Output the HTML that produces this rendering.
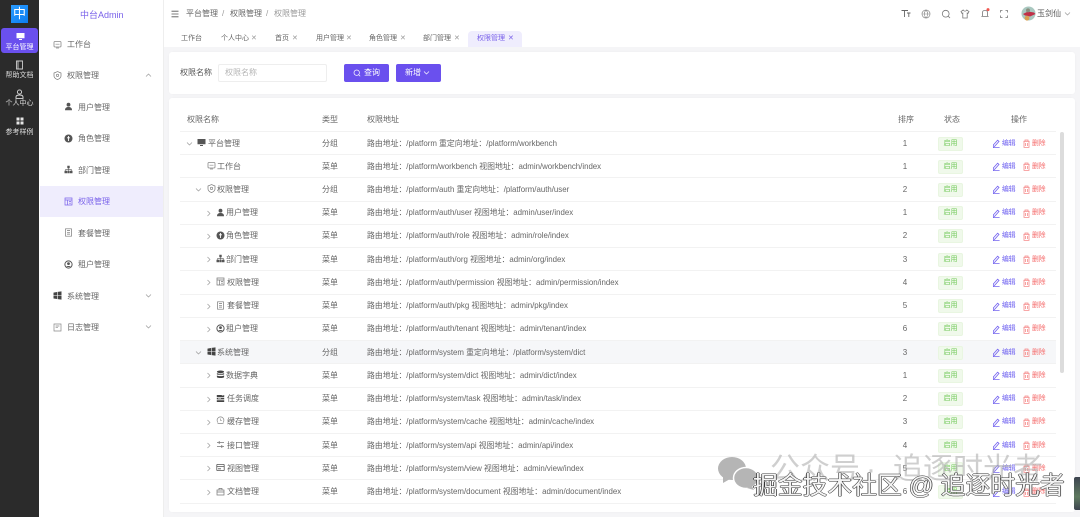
<!DOCTYPE html>
<html lang="zh"><head><meta charset="utf-8"><title>权限管理</title>
<style>
*{box-sizing:border-box;margin:0;padding:0}
html,body{width:1080px;height:517px;overflow:hidden;background:#f5f5f7}
body{position:relative;font-family:"Liberation Sans","Noto Sans CJK SC",sans-serif;font-size:8px;color:#666}
#w{left:0;top:0;width:1080px;height:517px;overflow:hidden;background:#f5f5f7;filter:blur(.3px)}
div,span,svg{position:absolute;white-space:nowrap}
.rail{left:0;top:0;width:39px;height:517px;background:#2b2b2b}
.rl{left:0;width:39px;text-align:center;color:#ddd;font-size:7px;line-height:9px}
.side{left:39px;top:0;width:125px;height:517px;background:#fff;border-right:1px solid #eee}
.m{font-size:8px;line-height:12px;color:#666}
.hdr{left:164px;top:0;width:916px;height:47px;background:#fff}
.tab{top:34px;font-size:7px;line-height:10px;color:#666}
.x{font-size:7px;color:#999;top:34px;line-height:10px}
.card{background:#fff;border-radius:3px;left:169px;width:906px;box-shadow:0 0 2px rgba(0,0,0,.03)}
.th{top:115px;line-height:10px;color:#666;font-size:8px}
.row{left:180px;width:876px;height:23.25px;border-bottom:1px solid #f2f2f2}
.row span{line-height:10px;top:6.5px;color:#666}
.n{color:#5f5f5f}
.t{left:142px}
.p{left:187px;font-size:7.87px}
.s{left:700px;width:50px;text-align:center}
.b{left:758px!important;top:4.5px!important;width:25px;height:14px;background:#f0f9eb;border:1px solid #e9f6e1;border-radius:2px;color:#72c95a!important;text-align:center;line-height:12px!important;font-size:7px}
.e{left:822px;font-size:6.8px;color:#6a5cf0!important}
.d{left:852px;font-size:6.8px;color:#f56c6c!important}
.row svg{top:7px}
.ei{left:812px;width:8px;height:9px}
.di{left:842px;width:8px;height:9px}
.ch{width:7px;height:7px;top:8px!important}
.ic{width:9px;height:9px}
</style></head><body><div id="w">
<svg width="0" height="0" style="left:0;top:0"><defs>
<g id="pen"><path d="M2 8L1.4 5.8 5.6 1.2 7 2.4 2.8 7.2 1 8.2M1 8.6H7.6" fill="none" stroke="#7565ef" stroke-width=".8"/></g>
<g id="bin"><path d="M1.5 2.3H7.5M3 2V1H6V2M2 2.5V8.4H7V2.5M3.6 4V7M5.4 4V7" fill="none" stroke="#f58a8a" stroke-width=".8"/></g>
<g id="down"><path d="M1 2.5L3.5 5 6 2.5" fill="none" stroke="#999" stroke-width=".7"/></g>
<g id="right"><path d="M2.5 1L5 3.5 2.5 6" fill="none" stroke="#999" stroke-width=".7"/></g>
<g id="mon"><path d="M.5 1H8.5V6.2H.5ZM3 8H6V7H3Z" fill="#555"/></g>
<g id="wb"><rect x="1" y="1.5" width="7" height="5.5" rx="1" fill="none" stroke="#888" stroke-width=".8"/><path d="M2.5 4.2H6.5M3 8H6" stroke="#888" stroke-width=".7"/></g>
<g id="shield"><path d="M4.5.6L8 2V5C8 7 6 8 4.5 8.6 3 8 1 7 1 5V2Z" fill="none" stroke="#777" stroke-width=".7"/><circle cx="4.5" cy="4.4" r="1.2" fill="none" stroke="#777" stroke-width=".6"/></g>
<g id="user"><circle cx="4.5" cy="2.7" r="1.9" fill="#555"/><path d="M1 8.2C1 5.8 2.5 5 4.5 5S8 5.8 8 8.2Z" fill="#555"/></g>
<g id="role"><circle cx="4.5" cy="4.5" r="4" fill="#555"/><path d="M4.5 2V7M3 3.8H6" stroke="#fff" stroke-width=".9"/></g>
<g id="org"><path d="M3.3 .8H5.7V3.2H3.3ZM.5 5.8H3V8.2H.5ZM3.3 5.8H5.7V8.2H3.3ZM6 5.8H8.5V8.2H6Z" fill="#555"/><path d="M1.7 5.8V4.4H7.3V5.8M4.5 3V5.8" fill="none" stroke="#555" stroke-width=".6"/></g>
<g id="perm"><path d="M1 1H8V8H1ZM1 3H8M3.5 3V8M5 4.5H7M5 6.2H7" fill="none" stroke="#777" stroke-width=".7"/></g>
<g id="pkg"><path d="M1.5 .8H7.5V8.2H1.5ZM3 2.5H6M3 4.3H6M3 6.1H6" fill="none" stroke="#777" stroke-width=".7"/></g>
<g id="ten"><circle cx="4.5" cy="4.5" r="3.6" fill="none" stroke="#555" stroke-width="1"/><circle cx="4.5" cy="3.6" r="1.4" fill="#555"/><path d="M2.2 7C2.8 5.7 6.2 5.7 6.8 7" fill="#555"/></g>
<g id="win"><path d="M.5 1.6L4 1V4.2H.5ZM4.6 .9L8.5 .4V4.2H4.6ZM.5 4.8H4V8L.5 7.5ZM4.6 4.8H8.5V8.6L4.6 8.1Z" fill="#444"/></g>
<g id="log"><path d="M1 1H8V8H1ZM2.6 3H6.4M2.6 4.7H5" fill="none" stroke="#888" stroke-width=".7"/></g>
<g id="db"><ellipse cx="4.5" cy="1.8" rx="3.6" ry="1.3" fill="#444"/><path d="M.9 3V4.2C.9 5 8.1 5 8.1 4.2V3C7 4 2 4 .9 3ZM.9 5.4V7C.9 8.4 8.1 8.4 8.1 7V5.4C7 6.4 2 6.4 .9 5.4Z" fill="#444"/></g>
<g id="task"><path d="M.8 1H8.2V3H.8ZM.8 3.8H8.2V5.4H.8ZM.8 6.2H8.2V8H.8Z" fill="#444"/><path d="M5.8 1.6H7.6M2 4.6H5" stroke="#fff" stroke-width=".5"/></g>
<g id="cache"><path d="M2 6.6A3.4 3.4 0 1 1 7 6.6M1.6 7.6H7.4" fill="none" stroke="#888" stroke-width=".7"/><path d="M4.5 2.5V4.5H6" fill="none" stroke="#888" stroke-width=".6"/></g>
<g id="api"><path d="M1 2.5H8M1 6.5H8M3.2 1V4M5.8 5V8" fill="none" stroke="#777" stroke-width=".8"/></g>
<g id="view"><rect x=".8" y="1.4" width="7.4" height="6.2" rx=".6" fill="none" stroke="#555" stroke-width=".8"/><path d="M.8 3.4H8.2M2 5.8H5" stroke="#555" stroke-width=".8"/></g>
<g id="doc"><path d="M1 3H8V8H1ZM3 3V1.4H6V3M1 5H8" fill="none" stroke="#777" stroke-width=".7"/></g>
</defs></svg>

<div class="rail"></div>
<div style="left:11px;top:5px;width:17px;height:18px;background:linear-gradient(135deg,#2a9cff,#0c7cf0);color:#fff;font-size:13px;line-height:18px;text-align:center">中</div>
<div style="left:1px;top:28px;width:37px;height:25px;background:#6a50ee;border-radius:3px"></div>
<svg style="left:16px;top:32px" width="9" height="9"><path d="M.5 1H8.5V6.2H.5ZM3 8H6V7H3Z" fill="#fff"/></svg>
<div class="rl" style="top:43px;color:#fff">平台管理</div>
<svg style="left:15px;top:60px" width="9" height="10"><path d="M1.5 1H7.5V9H1.5ZM3 1V9" fill="none" stroke="#ccc" stroke-width=".9"/></svg>
<div class="rl" style="top:71px">帮助文档</div>
<svg style="left:15px;top:89px" width="9" height="10"><circle cx="4.5" cy="3" r="2.1" fill="none" stroke="#ddd" stroke-width=".9"/><path d="M1 9.4V8C1 6.6 2.5 6 4.5 6S8 6.6 8 8V9.4Z" fill="none" stroke="#ddd" stroke-width=".9"/></svg>
<div class="rl" style="top:99px">个人中心</div>
<svg style="left:16px;top:117px" width="8" height="8"><path d="M.5.5H3.5V3.5H.5ZM4.5.5H7.5V3.5H4.5ZM.5 4.5H3.5V7.5H.5ZM4.5 4.5H7.5V7.5H4.5Z" fill="#e5e5e5"/></svg>
<div class="rl" style="top:128px">参考样例</div>

<div class="side"></div>
<div style="left:80px;top:9px;font-size:9px;line-height:12px;color:#7a62ea">中台Admin</div>
<svg class="ic" style="left:53px;top:40px"><use href="#wb"/></svg><div class="m" style="left:67px;top:39px">工作台</div>
<svg class="ic" style="left:53px;top:71px"><use href="#shield"/></svg><div class="m" style="left:67px;top:70px">权限管理</div>
<svg style="left:145px;top:72px" width="7" height="7"><path d="M1 4.5L3.5 2 6 4.5" fill="none" stroke="#999" stroke-width=".7"/></svg>
<svg class="ic" style="left:64px;top:102px"><use href="#user"/></svg><div class="m" style="left:78px;top:102px">用户管理</div>
<svg class="ic" style="left:64px;top:134px"><use href="#role"/></svg><div class="m" style="left:78px;top:133px">角色管理</div>
<svg class="ic" style="left:64px;top:165px"><use href="#org"/></svg><div class="m" style="left:78px;top:165px">部门管理</div>
<div style="left:40px;top:186px;width:123px;height:31px;background:#efedfd"></div>
<svg class="ic" style="left:64px;top:197px"><path d="M1 1H8V8H1ZM1 3H8M3.5 3V8M5 4.5H7M5 6.2H7" fill="none" stroke="#7a62ea" stroke-width=".7"/></svg><div class="m" style="left:78px;top:196px;color:#7a62ea">权限管理</div>
<svg class="ic" style="left:64px;top:228px"><use href="#pkg"/></svg><div class="m" style="left:78px;top:228px">套餐管理</div>
<svg class="ic" style="left:64px;top:260px"><use href="#ten"/></svg><div class="m" style="left:78px;top:259px">租户管理</div>
<svg class="ic" style="left:53px;top:291px"><use href="#win"/></svg><div class="m" style="left:67px;top:291px">系统管理</div>
<svg style="left:145px;top:292px" width="7" height="7"><use href="#down"/></svg>
<svg class="ic" style="left:53px;top:323px"><use href="#log"/></svg><div class="m" style="left:67px;top:322px">日志管理</div>
<svg style="left:145px;top:323px" width="7" height="7"><use href="#down"/></svg>

<div class="hdr"></div>
<svg style="left:171px;top:10px" width="8" height="8"><path d="M.5 1.2H7.5M.5 4H7.5M.5 6.8H7.5" stroke="#555" stroke-width=".8"/></svg>
<div style="left:186px;top:9px;line-height:10px;font-size:8px;color:#666">平台管理</div>
<div style="left:222px;top:9px;line-height:10px;color:#999">/</div>
<div style="left:230px;top:9px;line-height:10px;color:#666">权限管理</div>
<div style="left:266px;top:9px;line-height:10px;color:#999">/</div>
<div style="left:274px;top:9px;line-height:10px;color:#999">权限管理</div>

<svg style="left:901px;top:9px" width="10" height="9"><path d="M.5 1.5H7M3.5 1.5V8M6 4H9.5M7.8 4V8" fill="none" stroke="#666" stroke-width=".9"/></svg>
<svg style="left:921px;top:9px" width="10" height="10"><circle cx="5" cy="5" r="4" fill="none" stroke="#888" stroke-width=".7"/><path d="M1 5H9M5 1C2.8 3.5 2.8 6.5 5 9M5 1C7.2 3.5 7.2 6.5 5 9" fill="none" stroke="#888" stroke-width=".6"/></svg>
<svg style="left:941px;top:9px" width="10" height="10"><circle cx="4.7" cy="4.7" r="3.4" fill="none" stroke="#777" stroke-width=".8"/><path d="M7.2 7.2L9 9" stroke="#777" stroke-width=".8"/></svg>
<svg style="left:960px;top:9px" width="10" height="10"><path d="M3.2 1L1 2.6 2 4.4 2.8 4V9H7.2V4L8 4.4 9 2.6 6.8 1C6 2.6 4 2.6 3.2 1Z" fill="none" stroke="#777" stroke-width=".8"/></svg>
<svg style="left:980px;top:8px" width="10" height="11"><path d="M1.4 8.4H8.6M2.4 8.2V5C2.4 3.4 3.4 2.4 5 2.4S7.6 3.4 7.6 5V8.2" fill="none" stroke="#777" stroke-width=".8"/><circle cx="8" cy="1.6" r="1.5" fill="#f0564f"/></svg>
<svg style="left:1000px;top:10px" width="8" height="8"><path d="M.5 2.5V.5H2.5M5.5.5H7.5V2.5M7.5 5.5V7.5H5.5M2.5 7.5H.5V5.5" fill="none" stroke="#777" stroke-width=".8"/></svg>
<svg style="left:1021px;top:6px" width="15" height="15"><circle cx="7.5" cy="7.5" r="7" fill="#a9c8c0"/><path d="M2 8L7 5.5 13 6.5 14.5 8 9 10.5 4 9.5Z" fill="#c03048"/><circle cx="6" cy="12.2" r="2.4" fill="#d9a052"/><circle cx="7" cy="4.4" r="2" fill="#8a8f80"/></svg>
<div style="left:1037px;top:9px;line-height:10px;color:#555">玉剑仙</div>
<svg style="left:1064px;top:10px" width="7" height="7"><use href="#down"/></svg>

<div class="tab" style="left:181px">工作台</div>
<div class="tab" style="left:221px">个人中心</div><div class="x" style="left:251px">✕</div>
<div class="tab" style="left:275px">首页</div><div class="x" style="left:292px">✕</div>
<div class="tab" style="left:316px">用户管理</div><div class="x" style="left:346px">✕</div>
<div class="tab" style="left:369px">角色管理</div><div class="x" style="left:400px">✕</div>
<div class="tab" style="left:423px">部门管理</div><div class="x" style="left:454px">✕</div>
<div style="left:468px;top:31px;width:54px;height:16px;background:#efedfd;border-radius:4px 4px 0 0"></div>
<div class="tab" style="left:477px;color:#7a62ea">权限管理</div><div class="x" style="left:508px;color:#7a62ea">✕</div>

<div class="card" style="top:52px;height:42px"></div>
<div style="left:180px;top:68px;font-size:8px;line-height:10px;color:#555">权限名称</div>
<div style="left:218px;top:64px;width:109px;height:18px;border:1px solid #eee;border-radius:2px;background:#fff"></div>
<div style="left:225px;top:68px;line-height:10px;color:#b5b5b5">权限名称</div>
<div style="left:344px;top:64px;width:45px;height:18px;background:#6a50ee;border-radius:2px"></div>
<svg style="left:353px;top:69px" width="8" height="8"><circle cx="3.7" cy="3.7" r="2.7" fill="none" stroke="#fff" stroke-width=".7"/><path d="M5.7 5.7L7.2 7.2" stroke="#fff" stroke-width=".7"/></svg>
<div style="left:364px;top:68px;line-height:10px;color:#fff">查询</div>
<div style="left:396px;top:64px;width:45px;height:18px;background:#6a50ee;border-radius:2px"></div>
<div style="left:405px;top:68px;line-height:10px;color:#fff">新增</div>
<svg style="left:423px;top:69px" width="7" height="7"><path d="M1 2.5L3.5 5 6 2.5" fill="none" stroke="#fff" stroke-width=".7"/></svg>

<div class="card" style="top:98px;height:414px"></div>
<div class="th" style="left:187px">权限名称</div>
<div class="th" style="left:322px">类型</div>
<div class="th" style="left:367px">权限地址</div>
<div class="th" style="left:898px">排序</div>
<div class="th" style="left:944px">状态</div>
<div class="th" style="left:1011px">操作</div>
<div style="left:180px;top:131px;width:876px;height:1px;background:#f2f2f2"></div>

<div class="row" style="top:132px"><svg class="ch" style="left:6px"><use href="#down"/></svg><svg class="ic" style="left:17px;top:6px"><use href="#mon"/></svg><span class="n" style="left:28px">平台管理</span><span class="t">分组</span><span class="p">路由地址：/platform 重定向地址：/platform/workbench</span><span class="s">1</span><span class="b">启用</span><svg class="ei"><use href="#pen"/></svg><span class="e">编辑</span><svg class="di"><use href="#bin"/></svg><span class="d">删除</span></div>
<div class="row" style="top:155.2px"><svg class="ic" style="left:27px;top:6px"><use href="#wb"/></svg><span class="n" style="left:37px">工作台</span><span class="t">菜单</span><span class="p">路由地址：/platform/workbench 视图地址：admin/workbench/index</span><span class="s">1</span><span class="b">启用</span><svg class="ei"><use href="#pen"/></svg><span class="e">编辑</span><svg class="di"><use href="#bin"/></svg><span class="d">删除</span></div>
<div class="row" style="top:178.4px"><svg class="ch" style="left:15px"><use href="#down"/></svg><svg class="ic" style="left:27px;top:6px"><use href="#shield"/></svg><span class="n" style="left:37px">权限管理</span><span class="t">分组</span><span class="p">路由地址：/platform/auth 重定向地址：/platform/auth/user</span><span class="s">2</span><span class="b">启用</span><svg class="ei"><use href="#pen"/></svg><span class="e">编辑</span><svg class="di"><use href="#bin"/></svg><span class="d">删除</span></div>
<div class="row" style="top:201.7px"><svg class="ch" style="left:25px"><use href="#right"/></svg><svg class="ic" style="left:36px;top:6px"><use href="#user"/></svg><span class="n" style="left:46px">用户管理</span><span class="t">菜单</span><span class="p">路由地址：/platform/auth/user 视图地址：admin/user/index</span><span class="s">1</span><span class="b">启用</span><svg class="ei"><use href="#pen"/></svg><span class="e">编辑</span><svg class="di"><use href="#bin"/></svg><span class="d">删除</span></div>
<div class="row" style="top:224.9px"><svg class="ch" style="left:25px"><use href="#right"/></svg><svg class="ic" style="left:36px;top:6px"><use href="#role"/></svg><span class="n" style="left:46px">角色管理</span><span class="t">菜单</span><span class="p">路由地址：/platform/auth/role 视图地址：admin/role/index</span><span class="s">2</span><span class="b">启用</span><svg class="ei"><use href="#pen"/></svg><span class="e">编辑</span><svg class="di"><use href="#bin"/></svg><span class="d">删除</span></div>
<div class="row" style="top:248.1px"><svg class="ch" style="left:25px"><use href="#right"/></svg><svg class="ic" style="left:36px;top:6px"><use href="#org"/></svg><span class="n" style="left:46px">部门管理</span><span class="t">菜单</span><span class="p">路由地址：/platform/auth/org 视图地址：admin/org/index</span><span class="s">3</span><span class="b">启用</span><svg class="ei"><use href="#pen"/></svg><span class="e">编辑</span><svg class="di"><use href="#bin"/></svg><span class="d">删除</span></div>
<div class="row" style="top:271.4px"><svg class="ch" style="left:25px"><use href="#right"/></svg><svg class="ic" style="left:36px;top:6px"><use href="#perm"/></svg><span class="n" style="left:47px">权限管理</span><span class="t">菜单</span><span class="p">路由地址：/platform/auth/permission 视图地址：admin/permission/index</span><span class="s">4</span><span class="b">启用</span><svg class="ei"><use href="#pen"/></svg><span class="e">编辑</span><svg class="di"><use href="#bin"/></svg><span class="d">删除</span></div>
<div class="row" style="top:294.6px"><svg class="ch" style="left:25px"><use href="#right"/></svg><svg class="ic" style="left:36px;top:6px"><use href="#pkg"/></svg><span class="n" style="left:47px">套餐管理</span><span class="t">菜单</span><span class="p">路由地址：/platform/auth/pkg 视图地址：admin/pkg/index</span><span class="s">5</span><span class="b">启用</span><svg class="ei"><use href="#pen"/></svg><span class="e">编辑</span><svg class="di"><use href="#bin"/></svg><span class="d">删除</span></div>
<div class="row" style="top:317.8px"><svg class="ch" style="left:25px"><use href="#right"/></svg><svg class="ic" style="left:36px;top:6px"><use href="#ten"/></svg><span class="n" style="left:46px">租户管理</span><span class="t">菜单</span><span class="p">路由地址：/platform/auth/tenant 视图地址：admin/tenant/index</span><span class="s">6</span><span class="b">启用</span><svg class="ei"><use href="#pen"/></svg><span class="e">编辑</span><svg class="di"><use href="#bin"/></svg><span class="d">删除</span></div>
<div class="row" style="top:341px;background:#f6f7f9"><svg class="ch" style="left:15px"><use href="#down"/></svg><svg class="ic" style="left:27px;top:6px"><use href="#win"/></svg><span class="n" style="left:37px">系统管理</span><span class="t">分组</span><span class="p">路由地址：/platform/system 重定向地址：/platform/system/dict</span><span class="s">3</span><span class="b">启用</span><svg class="ei"><use href="#pen"/></svg><span class="e">编辑</span><svg class="di"><use href="#bin"/></svg><span class="d">删除</span></div>
<div class="row" style="top:364.3px"><svg class="ch" style="left:25px"><use href="#right"/></svg><svg class="ic" style="left:36px;top:6px"><use href="#db"/></svg><span class="n" style="left:46px">数据字典</span><span class="t">菜单</span><span class="p">路由地址：/platform/system/dict 视图地址：admin/dict/index</span><span class="s">1</span><span class="b">启用</span><svg class="ei"><use href="#pen"/></svg><span class="e">编辑</span><svg class="di"><use href="#bin"/></svg><span class="d">删除</span></div>
<div class="row" style="top:387.5px"><svg class="ch" style="left:25px"><use href="#right"/></svg><svg class="ic" style="left:36px;top:6px"><use href="#task"/></svg><span class="n" style="left:47px">任务调度</span><span class="t">菜单</span><span class="p">路由地址：/platform/system/task 视图地址：admin/task/index</span><span class="s">2</span><span class="b">启用</span><svg class="ei"><use href="#pen"/></svg><span class="e">编辑</span><svg class="di"><use href="#bin"/></svg><span class="d">删除</span></div>
<div class="row" style="top:410.7px"><svg class="ch" style="left:25px"><use href="#right"/></svg><svg class="ic" style="left:36px;top:5px"><use href="#cache"/></svg><span class="n" style="left:47px">缓存管理</span><span class="t">菜单</span><span class="p">路由地址：/platform/system/cache 视图地址：admin/cache/index</span><span class="s">3</span><span class="b">启用</span><svg class="ei"><use href="#pen"/></svg><span class="e">编辑</span><svg class="di"><use href="#bin"/></svg><span class="d">删除</span></div>
<div class="row" style="top:434px"><svg class="ch" style="left:25px"><use href="#right"/></svg><svg class="ic" style="left:36px;top:6px"><use href="#api"/></svg><span class="n" style="left:47px">接口管理</span><span class="t">菜单</span><span class="p">路由地址：/platform/system/api 视图地址：admin/api/index</span><span class="s">4</span><span class="b">启用</span><svg class="ei"><use href="#pen"/></svg><span class="e">编辑</span><svg class="di"><use href="#bin"/></svg><span class="d">删除</span></div>
<div class="row" style="top:457.2px"><svg class="ch" style="left:25px"><use href="#right"/></svg><svg class="ic" style="left:36px;top:6px"><use href="#view"/></svg><span class="n" style="left:47px">视图管理</span><span class="t">菜单</span><span class="p">路由地址：/platform/system/view 视图地址：admin/view/index</span><span class="s">5</span><span class="b">启用</span><svg class="ei"><use href="#pen"/></svg><span class="e">编辑</span><svg class="di"><use href="#bin"/></svg><span class="d">删除</span></div>
<div class="row" style="top:480.8px"><svg class="ch" style="left:25px"><use href="#right"/></svg><svg class="ic" style="left:36px;top:6px"><use href="#doc"/></svg><span class="n" style="left:47px">文档管理</span><span class="t">菜单</span><span class="p">路由地址：/platform/system/document 视图地址：admin/document/index</span><span class="s">6</span><span class="b">启用</span><svg class="ei"><use href="#pen"/></svg><span class="e">编辑</span><svg class="di"><use href="#bin"/></svg><span class="d">删除</span></div>

<div style="left:1060px;top:132px;width:3.5px;height:241px;background:#dcdcdc;border-radius:2px"></div>

<svg style="left:717px;top:456px" width="42" height="35"><ellipse cx="15" cy="12.5" rx="14" ry="11.5" fill="#b5b5b5"/><path d="M6 20L6 27 13 23Z" fill="#b5b5b5"/><ellipse cx="29" cy="22" rx="12.5" ry="10.5" fill="#b5b5b5" stroke="#fff" stroke-width="1.5"/><path d="M35 30L37 34 30 32Z" fill="#b5b5b5"/></svg>
<div style="left:770px;top:452px;font-size:30px;line-height:36px;color:rgba(175,175,175,.6)">公众号</div>
<div style="left:866px;top:452px;font-size:30px;line-height:36px;color:rgba(175,175,175,.6)">·</div>
<div style="left:893px;top:452px;font-size:30px;line-height:36px;color:rgba(175,175,175,.6)">追逐时光者</div>
<div style="left:753px;top:472px;font-size:24.8px;line-height:30px;color:#f4f4f4;text-shadow:-.7px 0 #333,.7px 0 #333,0 -.7px #333,0 .7px #333">掘金技术社区 @ 追逐时光者</div>
<div style="left:1074px;top:477px;width:6px;height:33px;background:linear-gradient(#3d4450,#5f7a60 60%,#3d4450);border-radius:2px 0 0 2px"></div>
</div></body></html>
